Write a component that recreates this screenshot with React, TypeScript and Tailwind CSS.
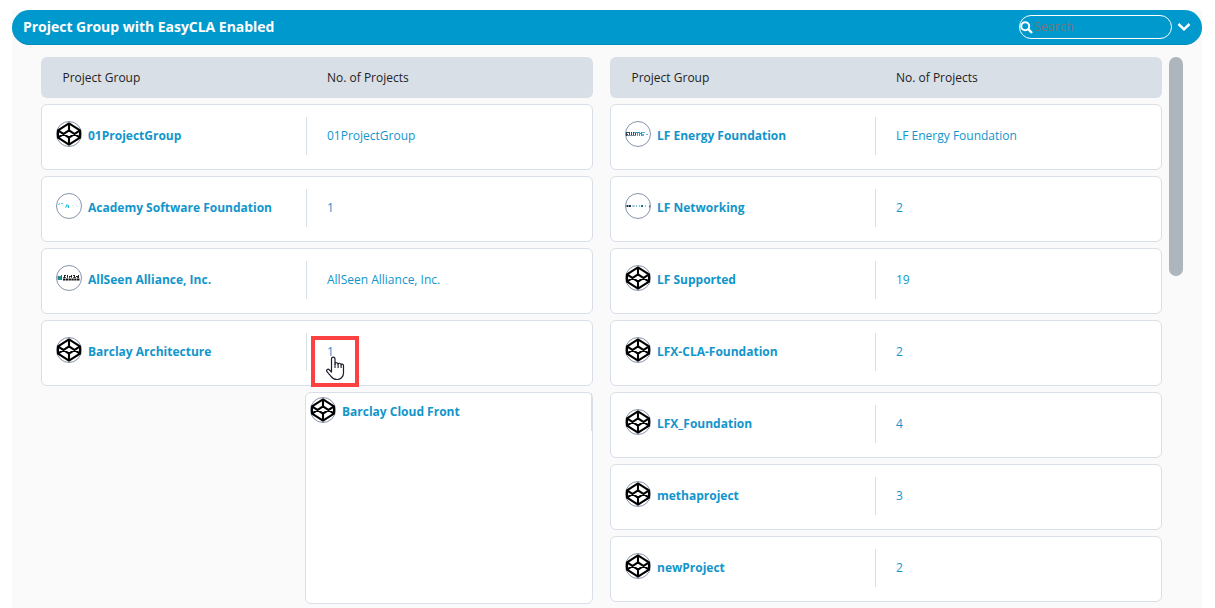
import React from "react";

type LogoKind = "default" | "academy" | "allseen" | "energy" | "networking";

interface Group {
  name: string;
  count: string;
  logo: LogoKind;
}

const leftGroups: Group[] = [
  { name: "01ProjectGroup", count: "01ProjectGroup", logo: "default" },
  { name: "Academy Software Foundation", count: "1", logo: "academy" },
  { name: "AllSeen Alliance, Inc.", count: "AllSeen Alliance, Inc.", logo: "allseen" },
  { name: "Barclay Architecture", count: "1", logo: "default" },
];

const rightGroups: Group[] = [
  { name: "LF Energy Foundation", count: "LF Energy Foundation", logo: "energy" },
  { name: "LF Networking", count: "2", logo: "networking" },
  { name: "LF Supported", count: "19", logo: "default" },
  { name: "LFX-CLA-Foundation", count: "2", logo: "default" },
  { name: "LFX_Foundation", count: "4", logo: "default" },
  { name: "methaproject", count: "3", logo: "default" },
  { name: "newProject", count: "2", logo: "default" },
];

function Marks({ kind }: { kind: LogoKind }) {
  switch (kind) {
    case "default":
      return (
        <g fill="none" stroke="#000" strokeWidth="2.1" strokeLinejoin="round">
          <path d="M13 2.3 L24 9.3 V16.7 L13 23.7 L2 16.7 V9.3 Z" />
          <path d="M13 2.3 V9.3 M13 16.7 V23.7" />
          <path d="M2 9.3 L13 16.7 L24 9.3 M2 16.7 L13 9.3 L24 16.7" />
        </g>
      );
    case "academy":
      return (
        <g fill="none" strokeWidth="1">
          <path d="M2 11.5h1.5M3 10.5h1M5 10.5h2" stroke="#4fe0e0" />
          <path d="M9.5 14.5l1.5-3v3M12.5 12v3" stroke="#22c4d6" />
          <path d="M16 12.5h2M19 11.5h2M17 14.5h1M20 13.5h3M23 11.5h1" stroke="#d5f5f5" />
        </g>
      );
    case "allseen":
      return (
        <g fill="none">
          <path d="M1.5 11h4v4h-4z" fill="#1c9a98" />
          <path d="M3 12v2M5.5 10v5" stroke="#73505a" />
          <path d="M8 10.5h2M11 10.5h1M13 11.5h3M17 10.5h2M20 11.5h3M8.5 11v2M11.5 11v2M15.5 10v3M18.5 10v3M22.5 10v3" stroke="#222" />
          <path d="M7 14.5h17" stroke="#111" strokeWidth="2" strokeDasharray="2.3 .5" />
          <path d="M7 12.5h16" stroke="#555" strokeDasharray="1 1" />
        </g>
      );
    case "energy":
      return (
        <g fill="none" strokeWidth="1">
          <path d="M1.5 11v4M2 11.5h2M2 13.5h1M4.5 11v4M6.5 11v4M7 14.5h1M8.5 11v4M10.5 11v4" stroke="#33475f" />
          <path d="M2 14.5h9M9 11.5h2" stroke="#7b8ba0" />
          <path d="M11 11.5h3M12.5 12v3M14.5 11v4M15 12.5h1M16.5 11v4" stroke="#269bc5" />
          <path d="M17 11.5h3M17 14.5h2M17 13.5h2M21 13.5h2" stroke="#5bb8dc" />
        </g>
      );
    case "networking":
      return (
        <g fill="none" strokeWidth="2">
          <path d="M1.5 13h5" stroke="#1f3146" strokeDasharray="2 .5" />
          <path d="M7 13h3" stroke="#6c9fbd" strokeWidth="1" />
          <path d="M11 13h1M14 13h1M20 13h1" stroke="#70c9ee" />
          <path d="M16 13h2M24 13.5h1" stroke="#1177aa" />
        </g>
      );
  }
}

function Logo({ kind }: { kind: LogoKind }) {
  return (
    <svg width="26" height="26" viewBox="0 0 26 26" className="shrink-0">
      <circle cx="13" cy="13" r="12.5" fill="#fff" stroke="#8793a9" />
      <Marks kind={kind} />
    </svg>
  );
}

function GroupRow({ group }: { group: Group }) {
  return (
    <div className="flex h-[66px] rounded-md border border-[#d9dfe7] bg-white pt-3">
      <div className="flex h-[38px] w-[265px] gap-1.5 border-r border-[#d9dfe7] pt-1 pl-3.5">
        <Logo kind={group.logo} />
        <span className="mt-1.5 text-xs leading-[18px] font-bold text-[#1295cb]">{group.name}</span>
      </div>
      <span className="mt-2.5 ml-5 h-[18px] text-xs leading-[18px] text-[#1295cb]">{group.count}</span>
    </div>
  );
}

function GroupColumn({ groups, children }: { groups: Group[]; children?: React.ReactNode }) {
  return (
    <div className="flex w-[552px] shrink-0 flex-col gap-1.5">
      <div className="flex h-[41px] items-center rounded-md bg-[#d9dfe7] pl-[21.5px] text-xs text-[#222]">
        <span className="w-[264.5px]">Project Group</span>
        <span>No. of Projects</span>
      </div>
      {groups.map((group) => (
        <GroupRow key={group.name} group={group} />
      ))}
      {children}
    </div>
  );
}

function HandCursor() {
  return (
    <svg width="20" height="25" viewBox="0 0 20 25" className="absolute top-4 left-[11px]">
      <path
        d="M5.5 16V3.2C5.5.5 9 .5 9 3.2v5c0-2 3-2 3.1.2 0-1.7 2.9-1.5 3 .5.2-1.5 2.4-1 2.4.8V17c0 4-3 6.5-6.5 6.5-3 0-4.5-1-6-3.2L1 15.7c-1.3-2.3 1.2-3.2 2.5-1.7L5.5 16Z"
        fill="#fff"
        stroke="#1b1b2b"
        strokeWidth="1.2"
        strokeLinejoin="round"
      />
      <path d="M9 8v4M12.1 8.5V12M15.1 9v3" stroke="#1b1b2b" strokeWidth="1.1" />
    </svg>
  );
}

export default function App() {
  return (
    <div className="relative h-[608px] w-[1215px] overflow-hidden bg-white pt-2.5 pl-3 font-['Open_Sans',sans-serif]">
      <section className="h-[598px] w-[1190px] bg-[#fafafa]">
        <header className="flex h-[35px] items-center rounded-full border-b border-[#0088b8] bg-[#0099cd] pl-[11px]">
          <h1 className="text-sm font-bold tracking-[-0.03px] text-white">Project Group with EasyCLA Enabled</h1>
          <div className="ml-auto flex h-6 w-[153px] items-center rounded-full border border-white">
            <svg width="13" height="13" viewBox="0 0 13 13" fill="none" stroke="#fff" className="shrink-0">
              <circle cx="5.2" cy="5.2" r="4" strokeWidth="2" />
              <path d="M8.2 8.2 12 12" strokeWidth="2.4" />
            </svg>
            <input
              aria-label="Search"
              placeholder="Search"
              className="ml-px w-[120px] bg-transparent text-[12.5px] text-white outline-none placeholder:text-[#757575]"
            />
          </div>
          <svg width="14" height="10" viewBox="0 0 14 10" className="mr-[11px] ml-[5px]">
            <path d="M1.5 2 7 7.3 12.5 2" fill="none" stroke="#fff" strokeWidth="2.5" />
          </svg>
        </header>
        <div className="flex pt-3 pl-[29px]">
          <GroupColumn groups={leftGroups}>
            <div className="ml-[264px] h-[212px] rounded-md border border-[#d9dfe7] bg-white pt-1 pl-1">
              <div className="flex gap-1.5">
                <Logo kind="default" />
                <span className="mt-1.5 text-xs leading-[18px] font-bold text-[#1295cb]">Barclay Cloud Front</span>
                <div className="-mt-1 ml-auto h-[38px] w-px bg-[#d9dfe7]" />
              </div>
            </div>
          </GroupColumn>
          <div className="ml-[17px]">
            <GroupColumn groups={rightGroups} />
          </div>
          <div className="ml-[7px] h-[219px] w-3.5 rounded-full bg-[#adb5bd]" />
        </div>
      </section>
      <div className="absolute top-[336px] left-[311px] h-[51px] w-12 border-4 border-[#fb4141]">
        <div className="relative">
          <HandCursor />
        </div>
      </div>
    </div>
  );
}
